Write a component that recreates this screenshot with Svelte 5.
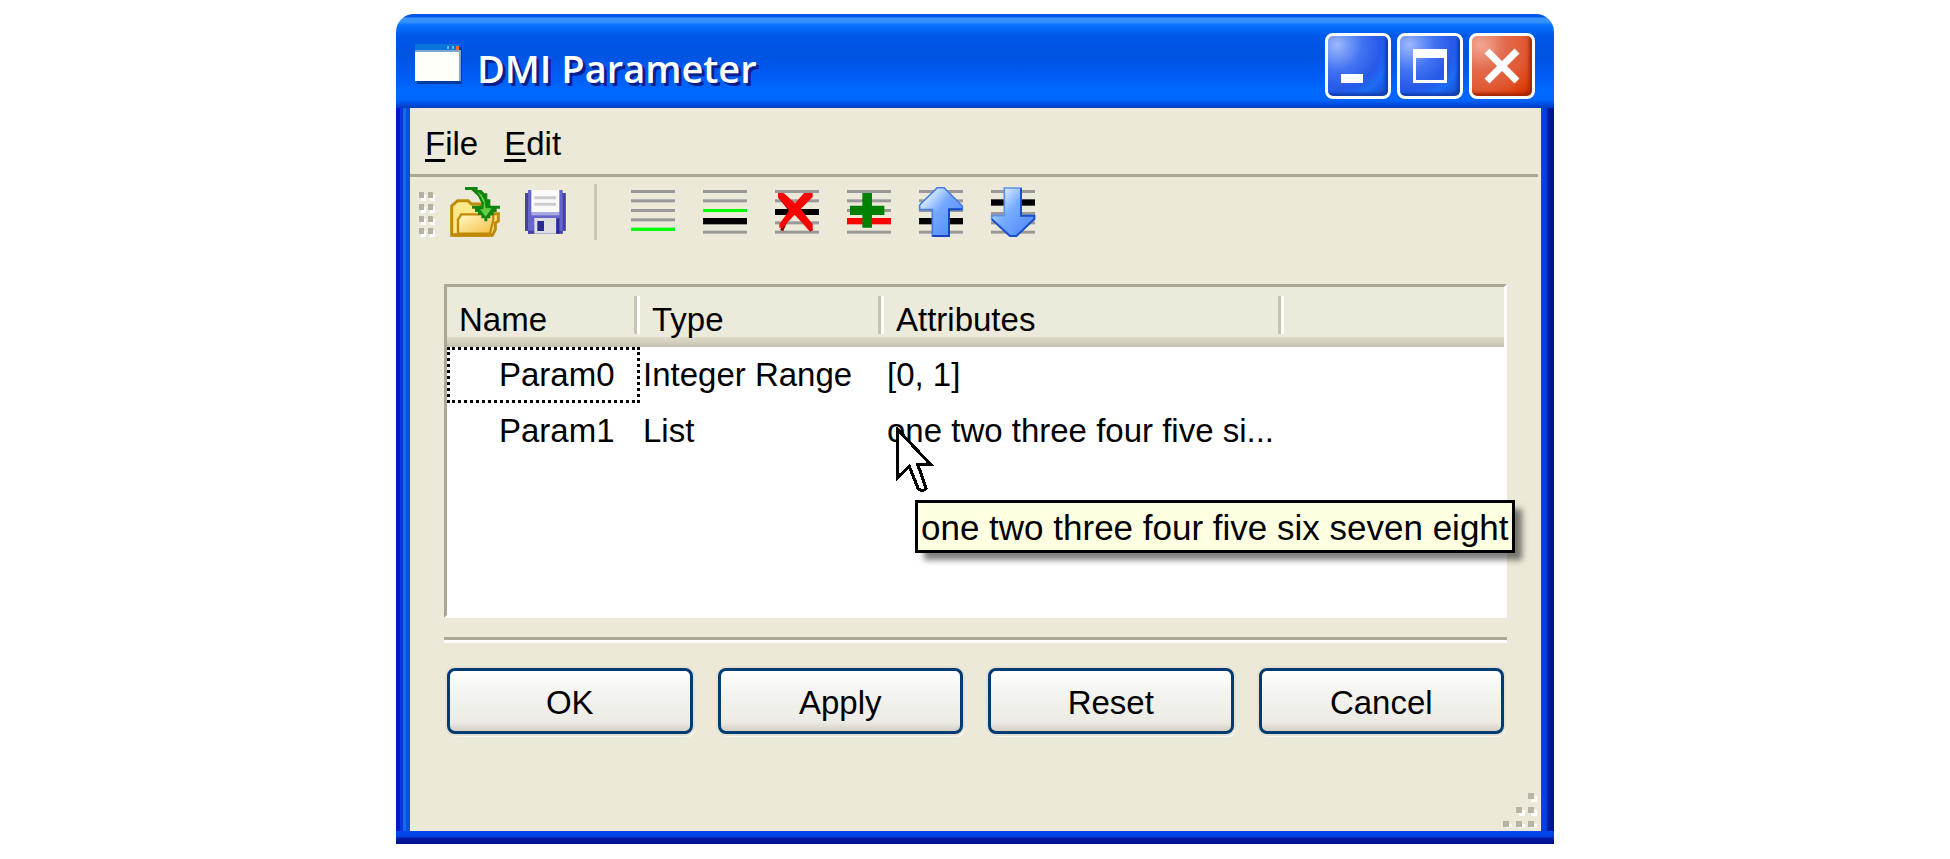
<script>
  const menus = ['File', 'Edit'];
  const columns = ['Name', 'Type', 'Attributes'];

  let params = [
    { name: 'Param0', type: 'Integer Range', attributes: '[0, 1]' },
    { name: 'Param1', type: 'List', attributes: 'one two three four five si...', hint: 'one two three four five six seven eight' }
  ];

  // Each bar: [y, height, colour]
  const grey = '#999999';
  const tools = [
    { id: 'add', label: 'Add parameter', bars: [[9, 9, grey], [37, 9, grey], [66, 9, grey], [94, 9, grey], [122, 10, '#00ff00']] },
    { id: 'insert', label: 'Insert parameter', bars: [[9, 9, grey], [37, 9, grey], [66, 9, '#00ff00'], [93, 19, '#000'], [131, 9, grey]] },
    { id: 'delete', label: 'Delete parameter', bars: [[9, 9, grey], [37, 9, grey], [66, 18, '#000'], [103, 9, grey], [131, 9, grey]] },
    { id: 'undelete', label: 'Restore parameter', bars: [[9, 9, grey], [37, 9, grey], [66, 9, grey], [93, 19, '#f00'], [131, 9, grey]] },
    { id: 'up', label: 'Move up', bars: [[9, 9, grey], [37, 9, grey], [66, 9, grey], [93, 19, '#000'], [131, 9, grey]] },
    { id: 'down', label: 'Move down', bars: [[9, 9, grey], [37, 19, '#000'], [75, 9, grey], [103, 9, grey], [131, 9, grey]] }
  ];

  const actions = ['OK', 'Apply', 'Reset', 'Cancel'];
  let selected = 0;
</script>

<main class="desktop">
  <section class="window">
    <header class="titlebar">
      <svg class="app-icon" viewBox="0 0 47 40" aria-hidden="true">
        <rect x="2" y="3" width="45" height="37" fill="#063c9c" />
        <rect x="0" y="0" width="44" height="6" fill="#0873d8" />
        <rect x="32" y="2" width="2" height="3" fill="#69b5f5" />
        <rect x="37" y="2" width="2" height="3" fill="#69b5f5" />
        <rect x="41" y="2" width="3" height="4" fill="#ff6a2a" />
        <rect x="0" y="6" width="46" height="31" fill="#7ea6d4" />
        <rect x="0" y="8" width="44" height="29" fill="#fffffa" />
      </svg>
      <h1>DMI Parameter</h1>
      <div class="controls">
        <button class="control" aria-label="Minimize">
          <svg viewBox="0 0 66 66"><rect x="16" y="41" width="22" height="9" fill="#fff" /></svg>
        </button>
        <button class="control" aria-label="Maximize">
          <svg viewBox="0 0 66 66"><path d="M16 16h34v34H16zM19 25v22h28V25z" fill="#fff" fill-rule="evenodd" /></svg>
        </button>
        <button class="control close" aria-label="Close">
          <svg viewBox="0 0 66 66"><path d="M18 18L48 48M48 18L18 48" stroke="#fff" stroke-width="7" /></svg>
        </button>
      </div>
    </header>

    <div class="client">
      <nav class="menubar">
        {#each menus as menu}
          <button class="menu"><span>{menu[0]}</span>{menu.slice(1)}</button>
        {/each}
      </nav>

      <div class="toolbar">
        <svg class="handle" viewBox="0 0 16 48" aria-hidden="true">
          {#each [0, 12, 24, 36] as y}
            {#each [0, 9] as x}
              <rect x={x + 2} y={y + 3} width="5" height="6" fill="#fff" />
              <rect {x} {y} width="5" height="6" fill="#b5b09f" />
            {/each}
          {/each}
        </svg>

        <button class="tool" aria-label="Open">
          <svg viewBox="0 0 150 150">
            <defs>
              <linearGradient id="folder" x1="0" y1="0" x2="1" y2="1">
                <stop offset="0" stop-color="#fffbc4" />
                <stop offset="1" stop-color="#f5bd48" />
              </linearGradient>
            </defs>
            <path d="M5 145V57L23 41H54L64 51H92V80H145V102L136 108V128L127 145Z" fill="#fbe88b" stroke="#c08a08" stroke-width="9" />
            <path d="M24 138V98L34 82H130V98L120 140H24Z" fill="url(#folder)" stroke="#c08a08" stroke-width="7" />
            <path d="M10 144H128" stroke="#c08a08" stroke-width="11" />
            <path d="M45 0H83V9H94L103 19H112V37H121V56H150V65H140V75H131V85H121V94H112V103H103V94H94V84H84V75H75V65H66V56H94V47L84 28L74 18L64 9H45Z" fill="#118411" />
            <path d="M82 14L94 23L103 38L107 64H125L107 89L90 67H100L102 48L91 27Z" fill="#65cf42" />
          </svg>
        </button>
        <button class="tool" aria-label="Save">
          <svg viewBox="0 0 150 150">
            <path d="M9 18H18V9H122V18H131V131H122V140H18V131H9Z" fill="#6665cb" />
            <path d="M9 18H18V131H9ZM18 131H122V140H18ZM122 18H131V131H122Z" fill="#44449f" />
            <rect x="28" y="9" width="84" height="66" fill="#fafafa" />
            <path d="M37 28H102V37H37ZM37 47H102V56H37Z" fill="#cccccc" />
            <rect x="28" y="75" width="84" height="10" fill="#aaa9df" />
            <rect x="37" y="93" width="66" height="47" fill="#dedede" />
            <rect x="46" y="102" width="20" height="30" fill="#292994" />
            <rect x="103" y="94" width="9" height="46" fill="#272891" />
          </svg>
        </button>

        <span class="divider"></span>

        {#each tools as tool (tool.id)}
          <button class="tool" aria-label={tool.label}>
            <svg viewBox="0 0 150 150">
              {#each tool.bars as [y, height, fill]}
                <rect x="9" {y} width="132" {height} {fill} />
              {/each}
              {#if tool.id === 'delete'}
                <path d="M22 28L56 70L29 131M112 28L70 70L119 131" fill="none" stroke="#880000" stroke-width="10" />
                <path d="M18 18H35L69 49L96 18H122V30L86 66L122 112V131H112L68 83L32 122H22V112L52 70L18 30Z" fill="#ff0000" />
              {:else if tool.id === 'undelete'}
                <path d="M55 18H84V56H121V84H84V122H55V84H18V56H55Z" fill="#008000" />
              {:else if tool.id === 'up'}
                <defs>
                  <linearGradient id="blue-up" x1="0" y1="0" x2="1" y2="1">
                    <stop offset="0.15" stop-color="#e4f2ff" />
                    <stop offset="0.45" stop-color="#74a8ff" />
                    <stop offset="0.8" stop-color="#5b91fa" />
                  </linearGradient>
                </defs>
                <path d="M64 2H84L139 57V68H99V147H49V68H11V54Z" fill="url(#blue-up)" stroke="#4a7de2" stroke-width="5" />
                <path d="M138 67H99V147H49" fill="none" stroke="#1647c4" stroke-width="6" />
              {:else if tool.id === 'down'}
                <defs>
                  <linearGradient id="blue-down" x1="0" y1="0" x2="1" y2="1">
                    <stop offset="0.1" stop-color="#edf7ff" />
                    <stop offset="0.45" stop-color="#79adff" />
                    <stop offset="0.8" stop-color="#5b91fa" />
                  </linearGradient>
                </defs>
                <path d="M49 3H99V86H139V96L85 147H66L11 96V86H49Z" fill="url(#blue-down)" stroke="#5e90ea" stroke-width="5" />
                <path d="M99 4V86H139V96L85 147H66L11 97" fill="none" stroke="#1d50cc" stroke-width="6" />
              {/if}
            </svg>
          </button>
        {/each}
      </div>

      <div class="content">
        <div class="list">
          <table>
            <thead>
              <tr>
                {#each columns as column}
                  <th scope="col"><span>{column}</span></th>
                {/each}
                <td></td>
              </tr>
            </thead>
            <tbody>
              {#each params as param, i}
                <tr on:click={() => (selected = i)}>
                  <td class="name" class:focused={selected === i}>{param.name}</td>
                  <td>{param.type}</td>
                  <td class="attributes">
                    {param.attributes}
                    {#if param.hint}
                      <svg class="cursor" viewBox="0 0 12 21" aria-hidden="true">
                        <path d="M.5 .8V16L4.2 12.6L7 19.6Q8.5 21 9.5 19.4L6.9 12H11Z" fill="#fff" stroke="#000" />
                      </svg>
                      <div class="tooltip" role="tooltip">{param.hint}</div>
                    {/if}
                  </td>
                  <td></td>
                </tr>
              {/each}
            </tbody>
          </table>
        </div>
        <hr />
        <div class="actions">
          {#each actions as action}
            <button class="action">{action}</button>
          {/each}
        </div>
      </div>

      <footer class="statusbar">
        <svg class="grip" viewBox="0 0 35 35" aria-hidden="true">
          {#each [[25, 0], [13, 14], [25, 14], [0, 28], [13, 28], [25, 28]] as [x, y]}
            <rect x={x + 3} y={y + 3} width="6" height="6" fill="#fff" />
            <rect {x} {y} width="6" height="6" fill="#b8b4a3" />
          {/each}
        </svg>
      </footer>
    </div>
  </section>
</main>

<style>
  :global(body) {
    margin: 0;
    background: #fff;
  }

  .desktop {
    padding: 14px 0;
    font-family: 'Liberation Sans', Arial, sans-serif;
    font-size: 33px;
    line-height: 56px;
    color: #000;
  }

  button {
    font: inherit;
    color: inherit;
    padding: 0;
    border: none;
    background: none;
  }

  svg {
    display: block;
  }

  .window {
    box-sizing: border-box;
    max-width: 1158px;
    margin: 0 auto;
    padding: 0 13px 13px 14px;
    border-radius: 18px 18px 0 0;
    background:
      linear-gradient(#0055e8 0, #0055e8 3px, #3c95ff 4px, #3590ff 8px, #0872ff 11px, #0058e8 22px, #0053e1 40px, #005cf5 62px, #0068ff 76px, #0066fc 86px, #0048d8 91px, #003dc4 94px, transparent 94px),
      linear-gradient(transparent calc(100% - 13px), #0048f4 calc(100% - 13px), #003ee0 calc(100% - 7px), #001ca4 calc(100% - 6px), #00108c 100%),
      linear-gradient(90deg, #0018cc 0, #0018cc 4px, #0636dc 4px, #0636dc 7px, #1468ec 7px, #1468ec 10px, #0850dc 10px, #0850dc 14px, transparent 14px, transparent calc(100% - 13px), #0048f0 calc(100% - 13px), #0038d8 calc(100% - 7px), #001ca0 calc(100% - 6px), #001088 100%);
  }

  .titlebar {
    display: flex;
    align-items: center;
    height: 94px;
    padding: 0 6px 0 5px;
  }

  .app-icon {
    width: 47px;
    height: 40px;
    margin-top: 6px;
  }

  h1 {
    flex: 1;
    margin: 0 0 0 15px;
    padding-top: 14px;
    font-family: 'Open Sans', sans-serif;
    font-size: 38px;
    font-weight: 600;
    line-height: 56px;
    color: #fff;
    text-shadow: 3px 3px 0 #0a1e8c;
  }

  .controls {
    display: flex;
    gap: 6px;
    padding-top: 10px;
  }

  .control {
    box-sizing: border-box;
    width: 66px;
    height: 66px;
    border: 3px solid #fff;
    border-radius: 8px;
    background: radial-gradient(circle at 15% 15%, #9db8fb 0, #4273f2 35%, #2759e8 60%, #1c6cf5 75%, #1246c4 100%);
    box-shadow: inset -3px -3px 3px #1440b4;
  }

  .control svg {
    width: 66px;
    height: 66px;
    margin: -3px;
  }

  .close {
    background: radial-gradient(circle at 15% 15%, #f2a995 0, #e2694a 35%, #e15a35 60%, #dd3c08 85%, #b82c04 100%);
    box-shadow: inset -3px -3px 3px #a82a06;
  }

  .client {
    background: #ece9d8;
  }

  .menubar {
    display: flex;
    gap: 26px;
    height: 66px;
    margin-right: 3px;
    padding-left: 15px;
    border-bottom: 3px solid #aca899;
  }

  .menu {
    padding-top: 6px;
    line-height: 60px;
  }

  .menu span {
    text-decoration: underline;
    text-decoration-thickness: 3px;
    text-underline-offset: 4px;
  }

  .toolbar {
    display: flex;
    align-items: center;
    gap: 22px;
    height: 70px;
    padding-left: 9px;
  }

  .handle {
    width: 16px;
    height: 48px;
    margin-top: 8px;
    margin-right: -7px;
  }

  .tool,
  .tool svg {
    width: 50px;
    height: 50px;
  }

  .divider {
    width: 3px;
    height: 56px;
    margin-right: 9px;
    background: #cbc7b4;
  }

  .content {
    padding: 37px 34px 0;
  }

  .list {
    height: 328px;
    border: 3px solid #fff;
    border-top-color: #aca899;
    border-left-color: #aca899;
    background: #fff;
  }

  table {
    width: 100%;
    table-layout: fixed;
    border-collapse: separate;
    border-spacing: 0;
  }

  th,
  td {
    box-sizing: border-box;
    padding: 0 0 0 3px;
    text-align: left;
    font-weight: normal;
    white-space: nowrap;
  }

  th:nth-child(1) {
    width: 193px;
  }

  th:nth-child(2) {
    width: 244px;
  }

  th:nth-child(3) {
    width: 400px;
  }

  thead th,
  thead td {
    height: 60px;
    padding: 9px 0 0;
    vertical-align: top;
    background: linear-gradient(#ebeadb 50px, #dfdbca 50px, #d4cfbe 55px, #c5c0ae 60px);
  }

  th span {
    display: block;
    height: 38px;
    padding-left: 12px;
    border-right: 3px solid #fff;
    box-shadow: inset -3px 0 #c6c3b2;
    line-height: 48px;
  }

  tbody td {
    height: 56px;
  }

  td.name {
    padding-left: 52px;
  }

  .focused {
    outline: 3px dotted #000;
    outline-offset: -3px;
  }

  .attributes {
    position: relative;
  }

  .cursor {
    position: absolute;
    top: 24px;
    left: 12px;
    width: 38px;
    height: 66px;
    shape-rendering: crispEdges;
  }

  .tooltip {
    position: absolute;
    top: 97px;
    left: 31px;
    padding: 3px 3px 0;
    border: 3px solid #000;
    background: #ffffe1;
    box-shadow: 8px 8px 6px -1px rgba(0, 0, 0, 0.5);
    font-size: 35px;
    line-height: 44px;
  }

  hr {
    height: 3px;
    margin: 19px 0 25px;
    border: none;
    border-bottom: 3px solid #fff;
    background: #aca899;
  }

  .actions {
    display: grid;
    grid-template-columns: repeat(4, 1fr);
    gap: 25px;
    padding: 0 3px;
  }

  .action {
    height: 66px;
    padding-top: 4px;
    border: 3px solid #003c74;
    border-radius: 8px;
    background: linear-gradient(#fff, #f4f4f0 35%, #ecebe5 85%, #d6d0c5);
    box-shadow: 0 0 0 2px #e5e0d0, 2px 3px 0 #f8f7f1;
  }

  .statusbar {
    display: flex;
    justify-content: flex-end;
    padding: 59px 3px 3px;
  }

  .grip {
    width: 35px;
    height: 35px;
  }
</style>
